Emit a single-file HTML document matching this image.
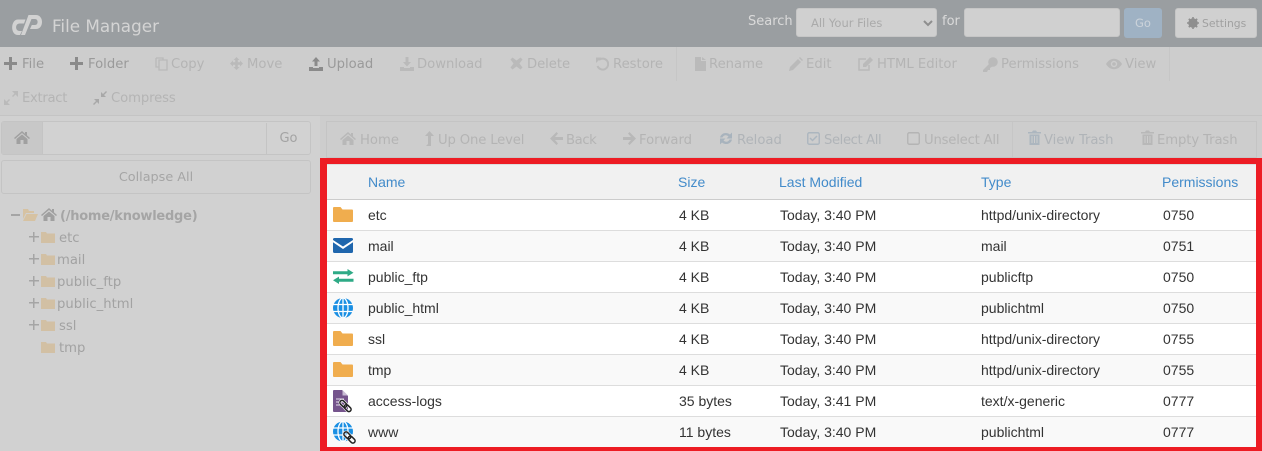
<!DOCTYPE html>
<html><head><meta charset="utf-8">
<style>
html,body{margin:0;padding:0;background:#cdcdcd}
body{width:1262px;height:451px;position:relative;overflow:hidden;font-family:"DejaVu Sans","Liberation Sans",sans-serif;}
.a{position:absolute;white-space:nowrap}
.t{position:absolute;white-space:nowrap;font-size:13.2px;line-height:18px;color:#b4b4b4}
.i{position:absolute}
.r{position:absolute;left:327px;width:929px;height:30px;border-bottom:1px solid #ddd;background:#fff}
.r.o{background:#f9f9f9}
.c{position:absolute;font:14px/18px "Liberation Sans",sans-serif;color:#333;white-space:nowrap}
.h{position:absolute;font:14px/18px "Liberation Sans",sans-serif;color:#428bca;white-space:nowrap;top:173px}
.tr{position:absolute;font-size:13.2px;line-height:18px;color:#a2a2a2;white-space:nowrap}
</style></head><body>

<!-- header -->
<div class="a" style="left:0;top:0;width:1262px;height:47px;background:#9a9ea1"></div>
<svg class="i" style="left:0;top:0" width="50" height="47" viewBox="0 0 50 47">
<path d="M25.500 19.500H18C10.500 19.500 10 35 18 35h2l2-4h-2.500C15 31 15 23.500 19.500 23.500H24z" fill="#d2d2d2"/>
<path d="M28.500 15H36c8 0 8 14 0 14h-6l1.800-4H35c3.500 0 3.500-6 0-6h-3.500L25 35h-4z" fill="#d2d2d2"/>
</svg>
<div class="a" style="left:52px;top:14px;font-size:16.800px;line-height:24px;color:#d4d4d4">File Manager</div>
<div class="a" style="left:748px;top:13px;font-size:13px;line-height:18px;color:#dadada">Search</div>
<div class="a" style="left:796px;top:8px;width:141px;height:29px;background:#d0d0d0;border:1px solid #c6c6c6;box-sizing:border-box;border-radius:3px"></div>
<div class="a" style="left:811px;top:15px;font-size:11.500px;line-height:16px;color:#aaa">All Your Files</div>
<svg class="i" style="left:922px;top:20px" width="12" height="8" viewBox="0 0 12 8"><path d="M2 1l4 4 4-4" fill="none" stroke="#8e8e8e" stroke-width="2"/></svg>
<div class="a" style="left:942px;top:13px;font-size:13px;line-height:18px;color:#dadada">for</div>
<div class="a" style="left:964px;top:8px;width:156px;height:29px;background:#d0d0d0;border:1px solid #c6c6c6;box-sizing:border-box;border-radius:3px"></div>
<div class="a" style="left:1124px;top:8px;width:38px;height:30px;background:#9fb2c4;border-radius:3px;text-align:center;font-size:11.500px;line-height:30px;color:#ccd3da">Go</div>
<div class="a" style="left:1175px;top:8px;width:82px;height:30px;background:#d0d0d0;border:1px solid #c6c6c6;box-sizing:border-box;border-radius:3px;font-size:10.800px;line-height:29px;color:#a0a0a0;padding-left:26px">Settings</div>
<svg class="i" style="left:1187px;top:17px" width="12" height="12" viewBox="0 0 12 12"><circle cx="6" cy="6" r="3.500" fill="none" stroke="#8f8f8f" stroke-width="2.600"/><path d="M6 0v12M0 6h12M1.800 1.800l8.400 8.400M10.200 1.800l-8.400 8.400" stroke="#8f8f8f" stroke-width="1.600"/></svg>

<!-- toolbar -->
<div class="a" style="left:0;top:115px;width:1262px;height:1px;background:#c4c4c4"></div>
<svg class="i" style="left:4px;top:57px" width="13" height="13"><path d="M5 0h3v5h5v3H8v5H5V8H0V5h5z" fill="#8a8a8a"/></svg>
<div class="t" style="left:22px;top:56px;color:#9a9a9a">File</div>
<svg class="i" style="left:70px;top:57px" width="13" height="13"><path d="M5 0h3v5h5v3H8v5H5V8H0V5h5z" fill="#8a8a8a"/></svg>
<div class="t" style="left:88px;top:56px;color:#9a9a9a">Folder</div>
<svg class="i" style="left:155px;top:57px" width="13" height="14" viewBox="0 0 13 14"><path d="M4 3h8v10H4zM1 1h7v2M1 1v9h3" fill="none" stroke="#bababa" stroke-width="1.300"/></svg>
<div class="t" style="left:171px;top:56px">Copy</div>
<svg class="i" style="left:230px;top:57px" width="13" height="13" viewBox="0 0 13 13"><path d="M6.500 0L9.500 3H7.800V5.200H10V3.500L13 6.500 10 9.500V7.800H7.800V10H9.500L6.500 13 3.500 10H5.200V7.800H3V9.500L0 6.500 3 3.500V5.200H5.200V3H3.500z" fill="#bababa"/></svg>
<div class="t" style="left:247px;top:56px">Move</div>
<svg class="i" style="left:309px;top:57px" width="14" height="14" viewBox="0 0 14 14"><path d="M7 0l4 4.500H8.500V9h-3V4.500H3zM0 10h4v1h6v-1h4v4H0z" fill="#8a8a8a"/></svg>
<div class="t" style="left:327px;top:56px;color:#9a9a9a">Upload</div>
<svg class="i" style="left:400px;top:57px" width="14" height="14" viewBox="0 0 14 14"><path d="M5.500 0h3v5H11L7 9.500 3 5h2.500zM0 10h4v1h6v-1h4v4H0z" fill="#bababa"/></svg>
<div class="t" style="left:417px;top:56px">Download</div>
<svg class="i" style="left:510px;top:57px" width="13" height="13" viewBox="0 0 13 13"><path d="M2.500 0.500l4 3 4-3L12.500 2.500l-3 4 3 4-2 2-4-3-4 3-2-2 3-4-3-4z" fill="#bababa"/></svg>
<div class="t" style="left:527px;top:56px;letter-spacing:-.05px">Delete</div>
<svg class="i" style="left:595px;top:57px" width="14" height="14" viewBox="0 0 14 14"><path d="M4 3a5.500 5.500 0 1 1-1.500 6" fill="none" stroke="#bababa" stroke-width="2"/><path d="M1 0.500h5.500L1 6z" fill="#bababa"/></svg>
<div class="t" style="left:613px;top:56px">Restore</div>
<div class="a" style="left:676px;top:47px;width:1px;height:34px;background:#c6c6c6"></div>
<svg class="i" style="left:695px;top:57px" width="11" height="14" viewBox="0 0 11 14"><path d="M0 0h6v4h5v10H0zM7 0l4 3H7z" fill="#bababa"/></svg>
<div class="t" style="left:709px;top:56px">Rename</div>
<svg class="i" style="left:789px;top:57px" width="14" height="14" viewBox="0 0 14 14"><path d="M0 14l1-4 8-8 3 3-8 8zM10 1l1-1 3 3-1 1z" fill="#bababa"/></svg>
<div class="t" style="left:806px;top:56px">Edit</div>
<svg class="i" style="left:857px;top:57px" width="16" height="14" viewBox="0 0 16 14"><path d="M9 2H2v11h10V8" fill="none" stroke="#bababa" stroke-width="1.500"/><path d="M6 10V7l7-7 3 3-7 7z" fill="#bababa"/></svg>
<div class="t" style="left:877px;top:56px">HTML Editor</div>
<svg class="i" style="left:983px;top:57px" width="15" height="15" viewBox="0 0 15 15"><circle cx="10" cy="5" r="4.800" fill="#bababa"/><path d="M7 6L0 13v2h4l1-2h2v-2l3-2z" fill="#bababa"/></svg>
<div class="t" style="left:1001px;top:56px">Permissions</div>
<svg class="i" style="left:1106px;top:58px" width="16" height="12" viewBox="0 0 16 12"><path d="M0 6c4-7 12-7 16 0-4 7-12 7-16 0z" fill="#bababa"/><circle cx="8" cy="6" r="3.200" fill="#cdcdcd"/><circle cx="8" cy="6" r="1.800" fill="#bababa"/></svg>
<div class="t" style="left:1125px;top:56px">View</div>
<div class="a" style="left:1169px;top:47px;width:1px;height:34px;background:#c6c6c6"></div>
<svg class="i" style="left:4px;top:91px" width="14" height="14" viewBox="0 0 14 14"><path d="M8 0h6v6L11.500 3.500 9 6 8 5l2.500-2.500zM0 14V8l2.500 2.500L5 8l1 1-2.500 2.500L6 14z" fill="#bababa"/></svg>
<div class="t" style="left:22px;top:90px;letter-spacing:-.3px">Extract</div>
<svg class="i" style="left:93px;top:91px" width="14" height="14" viewBox="0 0 14 14"><path d="M13 0l1 1-3 3 2 2H8V1l2 2zM1 14l-1-1 3-3-2-2h5v5l-2-2z" fill="#a8a8a8"/></svg>
<div class="t" style="left:111px;top:90px;letter-spacing:-.1px">Compress</div>

<!-- left panel -->
<div class="a" style="left:0;top:116px;width:320px;height:335px;background:#d1d1d1"></div>
<div class="a" style="left:1px;top:121px;width:310px;height:34px;border:1px solid #c4c4c4;box-sizing:border-box;border-radius:3px;background:#d2d2d2"></div>
<div class="a" style="left:2px;top:122px;width:41px;height:32px;background:#c8c8c8;border-right:1px solid #c4c4c4;box-sizing:border-box"></div>
<svg class="i" style="left:14px;top:131px" width="16" height="13" viewBox="0 0 16 13"><path d="M8 0L0 7l1 1 7-6 7 6 1-1-3-2.600V1h-2v1.700z" fill="#a0a0a0"/><path d="M8 3.500L2.500 8v5h4V9h3v4h4V8z" fill="#a0a0a0"/></svg>
<div class="a" style="left:266px;top:123px;width:44px;height:32px;border-left:1px solid #c4c4c4;box-sizing:border-box;text-align:center;font-size:13px;line-height:32px;color:#a3a3a3">Go</div>
<div class="a" style="left:1px;top:160px;width:310px;height:34px;border:1px solid #c4c4c4;box-sizing:border-box;border-radius:3px;text-align:center;font-size:12.800px;line-height:33px;color:#a5a5a5">Collapse All</div>

<div class="a" style="left:11px;top:214px;width:9px;height:2px;background:#a5a5a5"></div>
<svg class="i" style="left:23px;top:209px" width="15" height="12" viewBox="0 0 15 12"><path d="M0 0h5l1 2h5v2H3L0 10z" fill="#d6c2a2"/><path d="M3.500 5H15l-3 7H0z" fill="#d6c2a2"/></svg>
<svg class="i" style="left:41px;top:208px" width="16" height="13" viewBox="0 0 16 13"><path d="M8 0L0 7l1 1 7-6 7 6 1-1-3-2.600V1h-2v1.700z" fill="#a0a0a0"/><path d="M8 3.500L2.500 8v5h4V9h3v4h4V8z" fill="#a0a0a0"/></svg>
<div class="a" style="left:60px;top:208px;font-size:13px;font-weight:bold;line-height:18px;color:#a5a5a5;letter-spacing:-.24px">(/home/knowledge)</div>

<svg class="i" style="left:29px;top:232px" width="10" height="10"><path d="M4 0h1.500v4H10v1.500H5.500V10H4V5.500H0V4h4z" fill="#a5a5a5"/></svg>
<svg class="i" style="left:41px;top:231px" width="14" height="12" viewBox="0 0 14 12"><path d="M0 1h5l1 1.500h8V12H0z" fill="#d2c0a4"/></svg>
<div class="tr" style="left:59px;top:230px">etc</div>
<svg class="i" style="left:29px;top:254px" width="10" height="10"><path d="M4 0h1.500v4H10v1.500H5.500V10H4V5.500H0V4h4z" fill="#a5a5a5"/></svg>
<svg class="i" style="left:41px;top:253px" width="14" height="12" viewBox="0 0 14 12"><path d="M0 1h5l1 1.500h8V12H0z" fill="#d2c0a4"/></svg>
<div class="tr" style="left:57px;top:252px">mail</div>
<svg class="i" style="left:29px;top:276px" width="10" height="10"><path d="M4 0h1.500v4H10v1.500H5.500V10H4V5.500H0V4h4z" fill="#a5a5a5"/></svg>
<svg class="i" style="left:41px;top:275px" width="14" height="12" viewBox="0 0 14 12"><path d="M0 1h5l1 1.500h8V12H0z" fill="#d2c0a4"/></svg>
<div class="tr" style="left:57px;top:274px">public_ftp</div>
<svg class="i" style="left:29px;top:298px" width="10" height="10"><path d="M4 0h1.500v4H10v1.500H5.500V10H4V5.500H0V4h4z" fill="#a5a5a5"/></svg>
<svg class="i" style="left:41px;top:297px" width="14" height="12" viewBox="0 0 14 12"><path d="M0 1h5l1 1.500h8V12H0z" fill="#d2c0a4"/></svg>
<div class="tr" style="left:57px;top:296px">public_html</div>
<svg class="i" style="left:29px;top:320px" width="10" height="10"><path d="M4 0h1.500v4H10v1.500H5.500V10H4V5.500H0V4h4z" fill="#a5a5a5"/></svg>
<svg class="i" style="left:41px;top:319px" width="14" height="12" viewBox="0 0 14 12"><path d="M0 1h5l1 1.500h8V12H0z" fill="#d2c0a4"/></svg>
<div class="tr" style="left:59px;top:318px">ssl</div>
<svg class="i" style="left:41px;top:341px" width="14" height="12" viewBox="0 0 14 12"><path d="M0 1h5l1 1.500h8V12H0z" fill="#d2c0a4"/></svg>
<div class="tr" style="left:59px;top:340px">tmp</div>

<!-- action bar -->
<div class="a" style="left:326px;top:121px;width:931px;height:37px;border:1px solid #c4c4c4;box-sizing:border-box;background:#cdcdcd"></div>
<div class="a" style="left:1012px;top:122px;width:1px;height:35px;background:#c6c6c6"></div>
<svg class="i" style="left:340px;top:132px" width="16" height="13" viewBox="0 0 16 13"><path d="M8 0L0 7l1 1 7-6 7 6 1-1-3-2.600V1h-2v1.700z" fill="#b8b8b8"/><path d="M8 3.500L2.500 8v5h4V9h3v4h4V8z" fill="#b8b8b8"/></svg>
<div class="t" style="left:360px;top:132px">Home</div>
<svg class="i" style="left:425px;top:131px" width="9" height="15" viewBox="0 0 9 15"><path d="M4.500 0L9 5H6v10H1l2-2V5H0z" fill="#b8b8b8"/></svg>
<div class="t" style="left:438px;top:132px;letter-spacing:-.15px">Up One Level</div>
<svg class="i" style="left:550px;top:132px" width="13" height="13" viewBox="0 0 13 13"><path d="M6.500 0L8 1.500 5 5h8v3H5l3 3.500L6.500 13 0 6.500z" fill="#b8b8b8"/></svg>
<div class="t" style="left:566px;top:132px;letter-spacing:-.4px">Back</div>
<svg class="i" style="left:623px;top:132px" width="13" height="13" viewBox="0 0 13 13"><path d="M6.500 0L5 1.500 8 5H0v3h8l-3 3.500L6.500 13 13 6.500z" fill="#b8b8b8"/></svg>
<div class="t" style="left:639px;top:132px">Forward</div>
<svg class="i" style="left:719px;top:131px" width="14" height="15" viewBox="0 0 14 15"><path d="M1 6.500C2 2 7.500 0.500 11 3.500l2-2v6H7.500l2-2C7.500 3.500 4.500 4 3.500 6.500zM13 8.500c-1 4.500-6.500 6-10 3l-2 2v-6h5.500l-2 2c2 2 5 1.500 6-1z" fill="#a8b3bd"/></svg>
<div class="t" style="left:737px;top:132px;color:#b0b4b8">Reload</div>
<svg class="i" style="left:807px;top:132px" width="13" height="13" viewBox="0 0 13 13"><rect x=".75" y=".75" width="11.500" height="11.500" rx="1.500" fill="none" stroke="#acb6bf" stroke-width="1.400"/><path d="M3 6l2.500 2.500L10 4" fill="none" stroke="#acb6bf" stroke-width="1.500"/></svg>
<div class="t" style="left:824px;top:132px;color:#b0b4b8;letter-spacing:-.4px">Select All</div>
<svg class="i" style="left:907px;top:132px" width="13" height="13" viewBox="0 0 13 13"><rect x=".75" y=".75" width="11.500" height="11.500" rx="1.500" fill="none" stroke="#b4b4b4" stroke-width="1.400"/></svg>
<div class="t" style="left:924px;top:132px;letter-spacing:-.2px">Unselect All</div>
<svg class="i" style="left:1028px;top:130px" width="13" height="15" viewBox="0 0 13 15"><path d="M0 2h4l1-1.500h3L9 2h4v1.500H0zM1.500 4.500h10V15h-10z" fill="#acb6bf"/><path d="M4 6v7M6.500 6v7M9 6v7" stroke="#cdcdcd" stroke-width="1"/></svg>
<div class="t" style="left:1044px;top:132px;color:#b0b4b8;letter-spacing:-.1px">View Trash</div>
<svg class="i" style="left:1141px;top:130px" width="13" height="15" viewBox="0 0 13 15"><path d="M0 2h4l1-1.500h3L9 2h4v1.500H0zM1.500 4.500h10V15h-10z" fill="#b8b8b8"/><path d="M4 6v7M6.500 6v7M9 6v7" stroke="#cdcdcd" stroke-width="1"/></svg>
<div class="t" style="left:1157px;top:132px;letter-spacing:-.1px">Empty Trash</div>

<!-- red frame -->
<div class="a" style="left:320px;top:158px;width:942px;height:293px;background:#ed1c24"></div>
<div class="a" style="left:327px;top:164px;width:929px;height:283px;background:#fff"></div>
<div class="a" style="left:327px;top:164px;width:929px;background:#f1f1f1;border-bottom:1px solid #ccc;border-top:1px solid #ddd;height:34px"></div>
<div class="h" style="left:368px">Name</div>
<div class="h" style="left:678px">Size</div>
<div class="h" style="left:779px">Last Modified</div>
<div class="h" style="left:981px">Type</div>
<div class="h" style="left:1162px">Permissions</div>

<div class="r" style="top:200px"></div>
<div class="r o" style="top:231px"></div>
<div class="r" style="top:262px"></div>
<div class="r o" style="top:293px"></div>
<div class="r" style="top:324px"></div>
<div class="r o" style="top:355px"></div>
<div class="r" style="top:386px"></div>
<div class="r o" style="top:417px;border-bottom:0"></div>

<svg class="i" style="left:333px;top:207px" width="20" height="15" viewBox="0 0 20 15"><path d="M1 0h6.500l2 2.500H19a1 1 0 0 1 1 1V14a1 1 0 0 1-1 1H1a1 1 0 0 1-1-1V1a1 1 0 0 1 1-1z" fill="#f0ad4e"/></svg>
<div class="c" style="left:368px;top:206px">etc</div><div class="c" style="left:679px;top:206px">4 KB</div><div class="c" style="left:780px;top:206px">Today, 3:40 PM</div><div class="c" style="left:981px;top:206px">httpd/unix-directory</div><div class="c" style="left:1163px;top:206px">0750</div>

<svg class="i" style="left:333px;top:238px" width="20" height="15" viewBox="0 0 20 15"><rect width="20" height="15" rx="1.500" fill="#1f66ad"/><path d="M0 2l10 6.500L20 2v2.300L10 11 0 4.300z" fill="#fff"/></svg>
<div class="c" style="left:368px;top:237px">mail</div><div class="c" style="left:679px;top:237px">4 KB</div><div class="c" style="left:780px;top:237px">Today, 3:40 PM</div><div class="c" style="left:981px;top:237px">mail</div><div class="c" style="left:1163px;top:237px">0751</div>

<svg class="i" style="left:333px;top:269px" width="21" height="15" viewBox="0 0 21 15"><path d="M0 2.200h14.500V0L20.500 3.700 14.500 7.400V5.200H0z" fill="#2eaa86"/><path d="M20.500 9.800H6V7.600L0 11.300 6 15v-2.200h14.500z" fill="#2eaa86"/></svg>
<div class="c" style="left:368px;top:268px">public_ftp</div><div class="c" style="left:679px;top:268px">4 KB</div><div class="c" style="left:780px;top:268px">Today, 3:40 PM</div><div class="c" style="left:981px;top:268px">publicftp</div><div class="c" style="left:1163px;top:268px">0750</div>

<svg class="i" style="left:333px;top:298px" width="20" height="20" viewBox="0 0 20 20"><circle cx="10" cy="10" r="10" fill="#1a8fe3"/><path d="M0 6.500h20M0 13.500h20M10 0v20" stroke="#fff" stroke-width="1.300"/><ellipse cx="10" cy="10" rx="5" ry="10" fill="none" stroke="#fff" stroke-width="1.300"/></svg>
<div class="c" style="left:368px;top:299px">public_html</div><div class="c" style="left:679px;top:299px">4 KB</div><div class="c" style="left:780px;top:299px">Today, 3:40 PM</div><div class="c" style="left:981px;top:299px">publichtml</div><div class="c" style="left:1163px;top:299px">0750</div>

<svg class="i" style="left:333px;top:331px" width="20" height="15" viewBox="0 0 20 15"><path d="M1 0h6.500l2 2.500H19a1 1 0 0 1 1 1V14a1 1 0 0 1-1 1H1a1 1 0 0 1-1-1V1a1 1 0 0 1 1-1z" fill="#f0ad4e"/></svg>
<div class="c" style="left:368px;top:330px">ssl</div><div class="c" style="left:679px;top:330px">4 KB</div><div class="c" style="left:780px;top:330px">Today, 3:40 PM</div><div class="c" style="left:981px;top:330px">httpd/unix-directory</div><div class="c" style="left:1163px;top:330px">0755</div>

<svg class="i" style="left:333px;top:362px" width="20" height="15" viewBox="0 0 20 15"><path d="M1 0h6.500l2 2.500H19a1 1 0 0 1 1 1V14a1 1 0 0 1-1 1H1a1 1 0 0 1-1-1V1a1 1 0 0 1 1-1z" fill="#f0ad4e"/></svg>
<div class="c" style="left:368px;top:361px">tmp</div><div class="c" style="left:679px;top:361px">4 KB</div><div class="c" style="left:780px;top:361px">Today, 3:40 PM</div><div class="c" style="left:981px;top:361px">httpd/unix-directory</div><div class="c" style="left:1163px;top:361px">0755</div>

<svg class="i" style="left:333px;top:390px" width="22" height="25" viewBox="0 0 22 25"><path d="M0 1a1 1 0 0 1 1-1h8l6 6v15a1 1 0 0 1-1 1H1a1 1 0 0 1-1-1z" fill="#75548c"/><path d="M9.500 0l5.500 5.500H9.500z" fill="#c9bcd4"/><path d="M3 9h8M3 12h8M3 15h4" stroke="#e6e0ec" stroke-width="1"/><g transform="translate(12.500 16) rotate(45)"><rect x="-7" y="-2.200" width="8" height="4.400" rx="2.200" fill="none" stroke="#fff" stroke-width="2.600"/><rect x="-1" y="-2.200" width="8" height="4.400" rx="2.200" fill="none" stroke="#fff" stroke-width="2.600"/><rect x="-7" y="-2.200" width="8" height="4.400" rx="2.200" fill="none" stroke="#222" stroke-width="1.500"/><rect x="-1" y="-2.200" width="8" height="4.400" rx="2.200" fill="none" stroke="#222" stroke-width="1.500"/></g></svg>
<div class="c" style="left:368px;top:392px">access-logs</div><div class="c" style="left:679px;top:392px">35 bytes</div><div class="c" style="left:780px;top:392px">Today, 3:41 PM</div><div class="c" style="left:981px;top:392px">text/x-generic</div><div class="c" style="left:1163px;top:392px">0777</div>

<svg class="i" style="left:333px;top:421px" width="25" height="26" viewBox="0 0 25 26"><circle cx="10" cy="10.500" r="10" fill="#1a8fe3"/><path d="M0 7h20M0 14h20M10 .5v20" stroke="#fff" stroke-width="1.300"/><ellipse cx="10" cy="10.500" rx="5" ry="10" fill="none" stroke="#fff" stroke-width="1.300"/><g transform="translate(16.500 16.500) rotate(45)"><rect x="-7" y="-2.200" width="8" height="4.400" rx="2.200" fill="none" stroke="#fff" stroke-width="2.600"/><rect x="-1" y="-2.200" width="8" height="4.400" rx="2.200" fill="none" stroke="#fff" stroke-width="2.600"/><rect x="-7" y="-2.200" width="8" height="4.400" rx="2.200" fill="none" stroke="#222" stroke-width="1.500"/><rect x="-1" y="-2.200" width="8" height="4.400" rx="2.200" fill="none" stroke="#222" stroke-width="1.500"/></g></svg>
<div class="c" style="left:368px;top:423px">www</div><div class="c" style="left:679px;top:423px">11 bytes</div><div class="c" style="left:780px;top:423px">Today, 3:40 PM</div><div class="c" style="left:981px;top:423px">publichtml</div><div class="c" style="left:1163px;top:423px">0777</div>
</body></html>
